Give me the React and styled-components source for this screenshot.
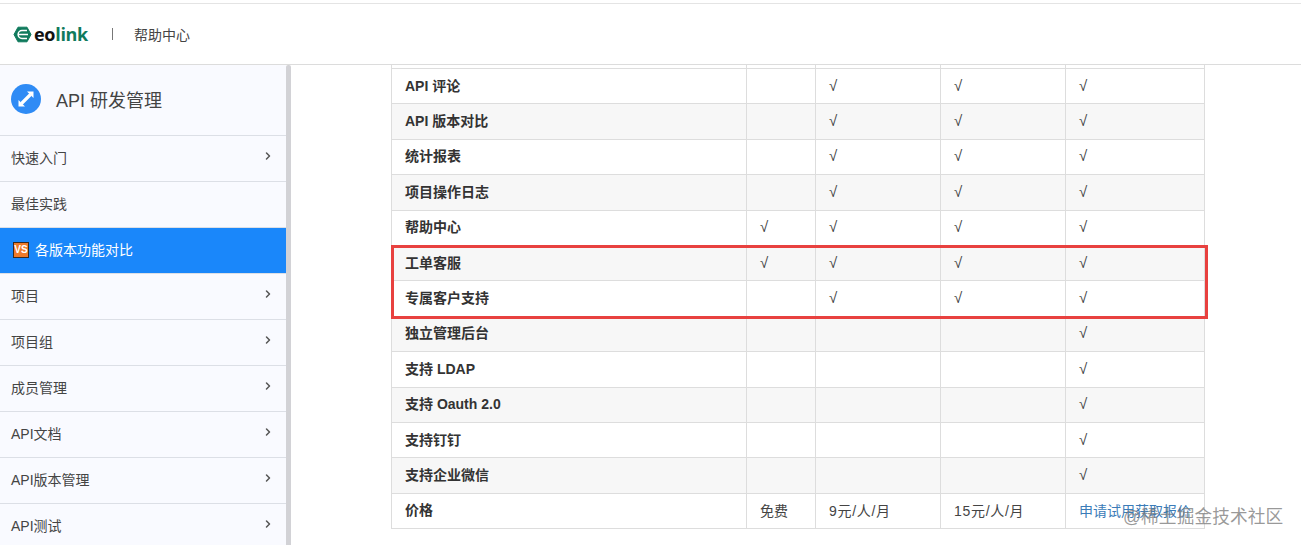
import React from 'react';
import styled, { createGlobalStyle } from 'styled-components';
import { ChevronRight } from 'lucide-react';

const GlobalStyle = createGlobalStyle`
  html, body {
    margin: 0;
    height: 100%;
    overflow: hidden;
    background: #fff;
  }
  body {
    font-family: "Liberation Sans", "Noto Sans CJK SC", sans-serif;
    color: #333;
  }
`;

const Page = styled.div`
  height: 545px;
  display: flex;
  flex-direction: column;
  overflow: hidden;
  position: relative;
`;

const Header = styled.header`
  height: 60px;
  margin-top: 3px;
  flex: none;
  display: flex;
  align-items: center;
  padding-left: 13px;
  border-top: 1px solid #e4e4e4;
  border-bottom: 1px solid #dcdcdc;
`;

const LogoWord = styled.span`
  font-family: "Open Sans", "Liberation Sans", sans-serif;
  font-weight: 700;
  font-size: 18px;
  letter-spacing: -0.3px;
  color: #111;
  margin-left: 2px;
  line-height: 1;
`;

const LogoAccent = styled.span`
  color: #0f7a5c;
`;

const Divider = styled.span`
  width: 1px;
  height: 12px;
  background: #777;
  margin: 0 21px 0 24px;
`;

const HeaderTitle = styled.span`
  font-size: 14px;
  color: #444;
  padding-bottom: 1px;
`;

const Body = styled.div`
  flex: 1;
  display: flex;
  min-height: 0;
`;

const Sidebar = styled.aside`
  width: 286px;
  flex: none;
  background: #f9faff;
  overflow: hidden;
`;

const Scrollbar = styled.div`
  width: 5px;
  flex: none;
  background: #d2d2d6;
  border-radius: 2px 2px 0 0;
`;

const SideTitle = styled.div`
  height: 71px;
  display: flex;
  align-items: center;
  gap: 15px;
  padding: 0 0 2px 11px;
  font-size: 18px;
  color: #444;
  border-bottom: 1px solid #dcdfe6;
  box-sizing: border-box;
`;

const NavItem = styled.div`
  height: 46px;
  box-sizing: border-box;
  display: flex;
  align-items: center;
  justify-content: space-between;
  padding: 0 12px 3px 11px;
  font-size: 14px;
  color: ${props => (props.$active ? '#fff' : '#444')};
  background: ${props => (props.$active ? '#1a87fa' : 'transparent')};
  border-bottom: 1px solid #dcdfe6;
`;

const NavLabel = styled.span`
  display: flex;
  align-items: center;
  gap: 6px;
`;

const NavArrow = styled(ChevronRight)`
  margin-bottom: 2px;
`;

const VsBadge = styled.span`
  width: 16px;
  height: 16px;
  margin: 2px 0 0 2px;
  box-sizing: border-box;
  background: #ee7a2a;
  border: 1px solid #3a2a20;
  color: #fff;
  font-size: 10px;
  font-weight: 700;
  line-height: 14px;
  text-align: center;
`;

const Main = styled.main`
  flex: 1;
  min-width: 0;
  overflow: hidden;
  padding-left: 100px;
`;

const Table = styled.table`
  border-collapse: collapse;
  table-layout: fixed;
  width: 814px;
  margin-top: -32.4px;
  font-size: 14px;
`;

const Row = styled.tr`
  height: 35.4px;
  background: ${props => (props.$alt ? '#f7f7f7' : '#fff')};
`;

const Name = styled.td`
  border: 1px solid #dddddd;
  padding: 0 13px 3px;
  font-weight: 700;
  color: #333;
`;

const Cell = styled.td`
  border: 1px solid #dddddd;
  padding: 0 13px 2px;
  color: ${props => (props.$link ? '#3b7cb8' : '#444')};
  letter-spacing: ${props => (props.$price ? '0.7px' : '0')};
  white-space: nowrap;
`;

const Tick = styled.span`
  font-size: 15px;
`;

const Highlight = styled.div`
  position: absolute;
  left: 391px;
  top: 245px;
  width: 817px;
  height: 74px;
  box-sizing: border-box;
  border: 3px solid #e8413f;
  pointer-events: none;
`;

const Watermark = styled.div`
  position: absolute;
  left: 1123px;
  top: 506px;
  font-size: 17.7px;
  line-height: 22px;
  letter-spacing: 0.1px;
  color: rgba(120, 120, 120, 0.75);
  pointer-events: none;
`;

const navItems = [
  { label: '快速入门', arrow: true },
  { label: '最佳实践' },
  { label: '各版本功能对比', active: true },
  { label: '项目', arrow: true },
  { label: '项目组', arrow: true },
  { label: '成员管理', arrow: true },
  { label: 'API文档', arrow: true },
  { label: 'API版本管理', arrow: true },
  { label: 'API测试', arrow: true },
];

const rows = [
  ['版本管理', '', '√', '√', '√'],
  ['API 评论', '', '√', '√', '√'],
  ['API 版本对比', '', '√', '√', '√'],
  ['统计报表', '', '√', '√', '√'],
  ['项目操作日志', '', '√', '√', '√'],
  ['帮助中心', '√', '√', '√', '√'],
  ['工单客服', '√', '√', '√', '√'],
  ['专属客户支持', '', '√', '√', '√'],
  ['独立管理后台', '', '', '', '√'],
  ['支持 LDAP', '', '', '', '√'],
  ['支持 Oauth 2.0', '', '', '', '√'],
  ['支持钉钉', '', '', '', '√'],
  ['支持企业微信', '', '', '', '√'],
  ['价格', '免费', '9元/人/月', '15元/人/月', '申请试用获取报价'],
];

const LogoMark = () => (
  <svg width="19" height="17" viewBox="0 0 19 17">
    <path d="M5 1.2h9l4 7.3-4 7.3H5L1 8.5z" fill="#0f7a5c" stroke="#0f7a5c" strokeLinejoin="round" />
    <path d="M14 4.6H9a3.9 3.9 0 0 0 0 7.8h5M5.6 8.5H15" fill="none" stroke="#fff" strokeWidth="1.5" />
  </svg>
);

const ApiIcon = () => (
  <svg width="30" height="30" viewBox="0 0 30 30">
    <circle cx="15" cy="15" r="15" fill="#2f8bf5" />
    <path d="M10.5 19.5l9-9" stroke="#fff" strokeWidth="3.2" fill="none" />
    <path d="M16 7.5h6.5V14zM14 22.5H7.5V16z" fill="#fff" />
  </svg>
);

export default function App() {
  return (
    <Page>
      <GlobalStyle />
      <Header>
        <LogoMark />
        <LogoWord>eo<LogoAccent>link</LogoAccent></LogoWord>
        <Divider />
        <HeaderTitle>帮助中心</HeaderTitle>
      </Header>
      <Body>
        <Sidebar>
          <SideTitle>
            <ApiIcon />
            API 研发管理
          </SideTitle>
          {navItems.map(item => (
            <NavItem key={item.label} $active={item.active}>
              <NavLabel>
                {item.active && <VsBadge>VS</VsBadge>}
                {item.label}
              </NavLabel>
              {item.arrow && <NavArrow size={12} strokeWidth={3} color="#555" />}
            </NavItem>
          ))}
        </Sidebar>
        <Scrollbar />
        <Main>
          <Table>
            <colgroup>
              <col width="355" />
              <col width="69" />
              <col width="125" />
              <col width="125" />
              <col width="139" />
            </colgroup>
            <tbody>
              {rows.map((row, i) => (
                <Row key={row[0]} $alt={i % 2 === 0 && i !== 0}>
                  <Name>{row[0]}</Name>
                  {row.slice(1).map((value, j) => (
                    <Cell key={j} $link={value.startsWith('申请')} $price={value.includes('/')}>
                      {value === '√' ? <Tick>{value}</Tick> : value}
                    </Cell>
                  ))}
                </Row>
              ))}
            </tbody>
          </Table>
        </Main>
      </Body>
      <Highlight />
      <Watermark>@稀土掘金技术社区</Watermark>
    </Page>
  );
}
